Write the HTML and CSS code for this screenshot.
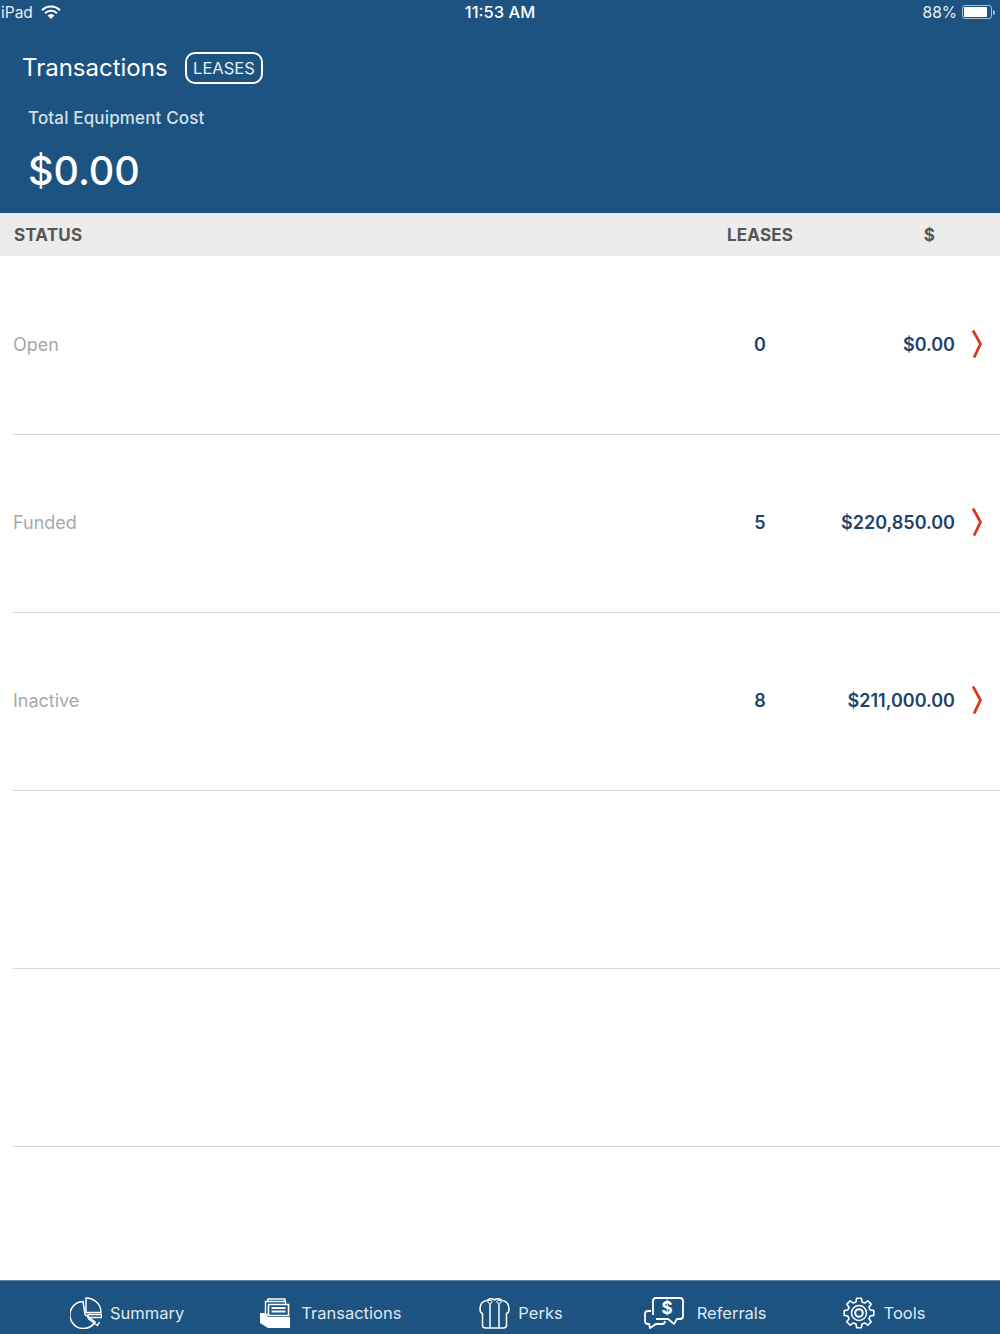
FILE: index.html
```html
<!DOCTYPE html>
<html lang="en">
<head>
  <meta charset="UTF-8" />
  <meta name="viewport" content="width=device-width, initial-scale=1.0"/>
  <title>Transactions</title>
  <link rel="stylesheet" href="styles.css">
</head>
<body>

<!-- Header -->
<div class="header">
  <div class="status-bar">
    <div class="status-left">
      <span>iPad</span>
      <svg class="wifi" width="20" height="14" viewBox="0 0 20 14">
        <path d="M1 5.2a12.6 12.6 0 0 1 18 0" fill="none" stroke="#fff" stroke-width="2"/>
        <path d="M4 8.2a8.4 8.4 0 0 1 12 0" fill="none" stroke="#fff" stroke-width="2"/>
        <path d="M6.6 10.6a4.6 4.6 0 0 1 6.8 0L10 14z" fill="#fff"/>
      </svg>
    </div>
    <div class="status-time">11:53 AM</div>
    <div class="status-right">
      <span>88%</span>
      <div class="battery"><div class="battery-level"></div></div>
      <div class="battery-tip"></div>
    </div>
  </div>

  <div class="title-row">
    <div class="title">Transactions</div>
    <div class="badge">LEASES</div>
  </div>
  <div class="total-label">Total Equipment Cost</div>
  <div class="total-value">$0.00</div>
</div>

<!-- Table -->
<div class="table-head">
  <div class="col-status">STATUS</div>
  <div class="col-leases">LEASES</div>
  <div class="col-amount">$</div>
</div>

<div class="rows">
  <div class="row">
    <div class="col-status">Open</div>
    <div class="col-leases">0</div>
    <div class="col-amount">$0.00</div>
    <svg class="chevron" width="12" height="28" viewBox="0 0 12 28"><path d="M1 0.5 8.5 14 2 27.500" fill="none" stroke="#d8371c" stroke-width="2.8"/></svg>
  </div>
  <div class="row">
    <div class="col-status">Funded</div>
    <div class="col-leases">5</div>
    <div class="col-amount">$220,850.00</div>
    <svg class="chevron" width="12" height="28" viewBox="0 0 12 28"><path d="M1 0.5 8.5 14 2 27.500" fill="none" stroke="#d8371c" stroke-width="2.8"/></svg>
  </div>
  <div class="row">
    <div class="col-status">Inactive</div>
    <div class="col-leases">8</div>
    <div class="col-amount">$211,000.00</div>
    <svg class="chevron" width="12" height="28" viewBox="0 0 12 28"><path d="M1 0.5 8.5 14 2 27.500" fill="none" stroke="#d8371c" stroke-width="2.8"/></svg>
  </div>
  <div class="row"></div>
  <div class="row"></div>
</div>

<!-- Tab bar -->
<div class="tabbar">
  <div class="tab tab-summary">
    <svg width="32" height="32" viewBox="0 0 32 32" fill="none" stroke="#fff" stroke-width="1.5">
      <path d="M13 4.500A13.500 13.500 0 1 0 25 25L15 17.500z"/>
      <path d="M16 1c8 0 15 6 15 14.500H16z"/>
      <path d="M18 17.500h13.500v3H18z"/>
      <path d="M18 21.500 27.500 28.500l2-3.500"/>
    </svg>
    <span>Summary</span>
  </div>
  <div class="tab tab-transactions">
    <svg width="30" height="30" viewBox="0 0 30 30">
      <path d="M8 1h17v3H8z" fill="none" stroke="#fff" stroke-width="1.4"/>
      <path d="M5.500 3.500h20v13h-20z" fill="#1d5380" stroke="#fff" stroke-width="1.4"/>
      <path d="M8.500 6.500h20v11h-20z" fill="#1d5380" stroke="#fff" stroke-width="1.6"/>
      <path d="M11.500 9h14v2h-14zM11.500 12.500h14v2h-14z" fill="#fff"/>
      <path d="M0 15h5l3 4h22v11H8l-8-5z" fill="#fff"/>
    </svg>
    <span>Transactions</span>
  </div>
  <div class="tab tab-perks">
    <svg width="31" height="32" viewBox="0 0 31 32" fill="none" stroke="#fff" stroke-width="1.500">
      <path d="M8 3.500C3.500 4 1 7 1 12c0 2.500 1 4 2.500 4.500V28c0 2 1 3 3 3h18c2 0 3-1 3-3V16.500c1.500-.5 2.500-2 2.500-4.500 0-5-2.500-8-7-8.500"/>
      <path d="M11 7v24M20 7v24"/>
      <path d="M8 3.500c2-2 5.500-2.500 7.500-.5 2-2 5.500-1.500 7.500.5"/>
      <ellipse cx="11" cy="4.800" rx="2.200" ry="1.600" stroke-width="1"/>
      <ellipse cx="20" cy="4.800" rx="2.200" ry="1.600" stroke-width="1"/>
    </svg>
    <span>Perks</span>
  </div>
  <div class="tab tab-referrals">
    <svg width="40" height="32" viewBox="0 0 40 32" fill="none" stroke="#fff" stroke-width="1.800">
      <path d="M9 18V4c0-1.700 1.300-3 3-3h24c1.700 0 3 1.300 3 3v15c0 1.700-1.300 3-3 3h-3l-3 5-6-5H12"/>
      <path d="M7 14H4c-1.700 0-3 1.300-3 3v7c0 1.700 1.300 3 3 3h1l1 4 6-4h6c1.700 0 3-1 3-3"/>
      <text x="23" y="17" text-anchor="middle" class="dollar">$</text>
    </svg>
    <span>Referrals</span>
  </div>
  <div class="tab tab-tools">
    <svg width="32" height="32" viewBox="0 0 32 32" fill="none" stroke="#fff" stroke-width="1.600" stroke-linejoin="round">
      <path d="M13.020 4.890 13.650 1.200H18.350L18.980 4.890 21.750 6.040 24.820 3.860 28.140 7.180 25.960 10.250 27.110 13.020 30.800 13.650V18.350L27.110 18.980 25.960 21.750 28.140 24.820 24.820 28.140 21.750 25.960 18.980 27.110 18.350 30.800H13.650L13.020 27.110 10.250 25.960 7.180 28.140 3.860 24.820 6.040 21.750 4.890 18.980 1.200 18.350V13.650L4.890 13.020 6.040 10.250 3.860 7.180 7.180 3.860 10.250 6.040z"/>
      <circle cx="16" cy="16" r="7.500"/>
      <circle cx="16" cy="16" r="3.800" stroke-width="2"/>
    </svg>
    <span>Tools</span>
  </div>
</div>

</body>
</html>
```
FILE: styles.css
```css
* {
  margin: 0;
  padding: 0;
  box-sizing: border-box;
}

body {
  font-family: Inter, 'Noto Sans', sans-serif;
  background: #fff;
  width: 1000px;
  height: 1334px;
  overflow: hidden;
  display: flex;
  flex-direction: column;
}

.header {
  background-color: #1d5380;
  color: #fff;
  height: 213px;
  flex-shrink: 0;
}

.status-bar {
  height: 24px;
  display: grid;
  grid-template-columns: 1fr auto 1fr;
  align-items: center;
  font-size: 15.500px;
  color: #e6eef5;
}

.status-left {
  display: flex;
  align-items: center;
  gap: 8px;
  padding-left: 1px;
}

.status-time {
  font-size: 16.500px;
  font-weight: 500;
  color: #fff;
}

.status-right {
  display: flex;
  align-items: center;
  justify-content: flex-end;
  padding-right: 5px;
}

.battery {
  width: 30px;
  height: 14px;
  margin-left: 5px;
  border: 1px solid #a9c0d3;
  border-radius: 3px;
  padding: 1px;
}

.battery-level {
  width: 88%;
  height: 100%;
  background: #fff;
  border-radius: 1px;
}

.battery-tip {
  width: 2px;
  height: 5px;
  margin-left: 1px;
  background: #a9c0d3;
  border-radius: 0 2px 2px 0;
}

.title-row {
  display: flex;
  align-items: center;
  gap: 17px;
  margin-top: 27px;
  padding-left: 22px;
}

.title {
  font-size: 24px;
  line-height: 34px;
}

.badge {
  font-size: 16.500px;
  line-height: 28px;
  height: 32px;
  padding: 0 6.500px;
  border: 2px solid #fff;
  border-radius: 10px;
  color: #e6eef5;
}

.total-label {
  margin-top: 21px;
  padding-left: 28px;
  font-size: 17px;
  line-height: 24px;
  font-weight: 500;
  letter-spacing: 0.15px;
  color: #d3e0ea;
}

.total-value {
  margin-top: 18px;
  padding-left: 28px;
  font-size: 39.500px;
  line-height: 46px;
  font-weight: 500;
}

.table-head {
  height: 43px;
  flex-shrink: 0;
  background: #ececec;
  display: flex;
  align-items: center;
  padding: 0 45px 0 14px;
  font-size: 17px;
  font-weight: 700;
  letter-spacing: 0.2px;
  color: #565656;
}

.rows {
  flex: 1;
  padding-top: 1px;
}

.row {
  height: 178px;
  margin-left: 13px;
  padding-bottom: 2px;
  border-bottom: 1px solid #d9d9d9;
  display: flex;
  align-items: center;
  font-size: 18px;
  font-weight: 600;
  color: #1d436b;
}

.col-status {
  flex: 1;
}

.row .col-status {
  font-weight: 400;
  color: #a8a8a8;
}

.col-leases {
  width: 80px;
  margin-right: 35px;
  text-align: center;
}

.col-amount {
  width: 120px;
  text-align: right;
}

.table-head .col-amount {
  padding-right: 20px;
}

.chevron {
  margin: 0 16px 2px 17px;
}

.tabbar {
  height: 54px;
  flex-shrink: 0;
  background: #1d5380;
  border-top: 1px solid #5f86a6;
  display: flex;
  align-items: center;
  padding: 11px 0 0 70px;
  gap: 76px;
  color: #dfe8f0;
  font-size: 16.500px;
}

.tab {
  display: flex;
  align-items: center;
  gap: 8px;
}

.tab-transactions {
  gap: 11px;
}

.tab-perks {
  margin-left: 2px;
}

.tab-referrals {
  gap: 13px;
  margin-left: 5px;
}

.tab-tools {
  gap: 9px;
}

.dollar {
  font-family: Inter, sans-serif;
  font-size: 17px;
  font-weight: 700;
  fill: #fff;
  stroke: none;
}
```
